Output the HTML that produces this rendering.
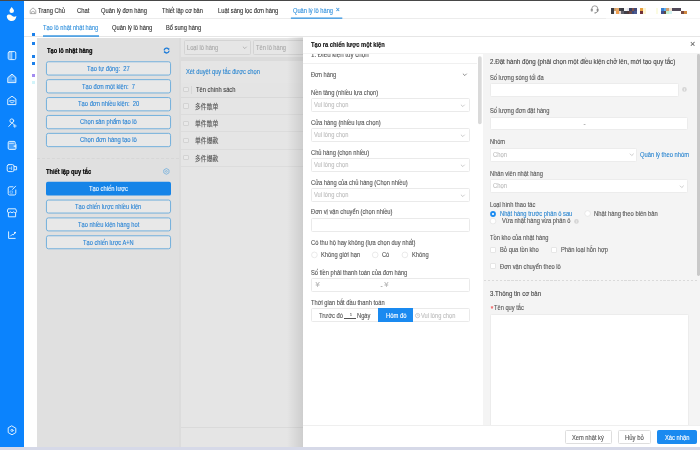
<!DOCTYPE html>
<html lang="vi">
<head>
<meta charset="utf-8">
<title>Quản lý lô hàng</title>
<style>
html,body{margin:0;padding:0;}
body{width:700px;height:450px;overflow:hidden;background:#fff;position:relative;font-family:"Liberation Sans","Noto Sans CJK SC",sans-serif;font-size:6px;color:#444;}
.a{position:absolute;box-sizing:border-box;}
.t{position:absolute;white-space:pre;line-height:1.15;transform-origin:0 50%;-webkit-text-stroke:0.12px currentColor;}
.sq{position:absolute;width:3px;height:3px;background:#1c80ea;left:32px;}
.inp{position:absolute;box-sizing:border-box;height:14.4px;border:0.8px solid #eaeaea;border-radius:1.5px;background:#fff;}
.cb{position:absolute;box-sizing:border-box;width:5.6px;height:5.6px;border:0.7px solid #e6e6e6;border-radius:1px;background:#fff;}
.cbm{position:absolute;box-sizing:border-box;width:5.8px;height:5.8px;border:0.7px solid #d3d3d3;border-radius:1px;background:#e9e9e9;}
.fb{position:absolute;box-sizing:border-box;top:430px;height:14px;border:0.8px solid #dedede;border-radius:1.5px;background:#fff;}
svg{position:absolute;overflow:visible;}
</style>
</head>
<body>
<!-- top strip -->
<div class="a" style="left:0;top:0;width:700px;height:1px;background:#484848;"></div>
<!-- sidebar -->
<div class="a" style="left:0;top:1px;width:24px;height:447px;background:#0b83fd;"></div>
<!-- bottom strip -->
<!-- nav borders -->
<div class="a" style="left:24px;top:18.2px;width:582px;height:0.8px;background:#ececec;"></div>
<div class="a" style="left:606px;top:18.2px;width:94px;height:0.8px;background:#f6f6f6;"></div>
<div class="a" style="left:24px;top:36.2px;width:676px;height:0.8px;background:#e6e6e6;"></div>
<svg style="left:0;top:0;" width="700" height="40" viewBox="0 0 700 40"><rect x="290.9" y="17.5" width="51.4" height="1.3" fill="#3393e0"/><rect x="43" y="35.3" width="56" height="1.5" fill="#3393e0"/></svg>
<!-- small squares -->
<div class="sq" style="top:33px;"></div>
<div class="sq" style="top:42.2px;"></div>
<div class="sq" style="top:55.2px;"></div>
<div class="sq" style="top:61.6px;"></div>
<div class="sq" style="top:74.3px;background:#a48cf0;"></div>
<div class="sq" style="top:80.8px;background:#d2f4fa;"></div>
<!-- left panel -->
<div class="a" style="left:37px;top:38px;width:266px;height:410px;background:#dcdcdc;"></div>
<div class="a" style="left:37px;top:38px;width:142px;height:410px;background:#e0e0e0;"></div>
<div class="a" style="left:37.2px;top:157.6px;width:142.3px;height:0;border-top:0.8px dashed #d7d7d7;"></div>
<svg style="left:0;top:0;" width="200" height="260" viewBox="0 0 200 260"><rect x="46.45" y="61.75" width="124.1" height="13.3" rx="1.9" fill="#e8e8e8" stroke="#66aadb" stroke-width="0.9"/><rect x="46.45" y="79.65" width="124.1" height="13.3" rx="1.9" fill="#e8e8e8" stroke="#66aadb" stroke-width="0.9"/><rect x="46.45" y="97.55" width="124.1" height="13.3" rx="1.9" fill="#e8e8e8" stroke="#66aadb" stroke-width="0.9"/><rect x="46.45" y="115.45" width="124.1" height="13.3" rx="1.9" fill="#e8e8e8" stroke="#66aadb" stroke-width="0.9"/><rect x="46.45" y="133.35" width="124.1" height="13.3" rx="1.9" fill="#e8e8e8" stroke="#66aadb" stroke-width="0.9"/><rect x="46" y="181.8" width="125" height="13.8" rx="1.9" fill="#1584e8"/><rect x="46.45" y="200.05" width="124.1" height="13.0" rx="1.9" fill="#e8e8e8" stroke="#66aadb" stroke-width="0.9"/><rect x="46.45" y="217.90" width="124.1" height="13.0" rx="1.9" fill="#e8e8e8" stroke="#66aadb" stroke-width="0.9"/><rect x="46.45" y="235.75" width="124.1" height="13.0" rx="1.9" fill="#e8e8e8" stroke="#66aadb" stroke-width="0.9"/></svg>
<!-- middle -->
<div class="a" style="left:181px;top:38px;width:122px;height:19px;background:#e5e5e5;"></div>
<div class="a" style="left:181px;top:57px;width:122px;height:4px;background:#dbdbdb;"></div>
<div class="a" style="left:181px;top:61px;width:122px;height:386.5px;background:#e5e5e5;"></div>
<div class="a" style="left:184px;top:40.4px;width:66.6px;height:14.2px;border:0.8px solid #d4d4d4;border-radius:1.5px;background:#e6e6e6;"></div>
<div class="a" style="left:253.4px;top:40.4px;width:60px;height:14.2px;border:0.8px solid #d4d4d4;border-radius:1.5px;background:#e6e6e6;"></div>
<svg style="left:241.6px;top:45.8px;" width="5.6" height="3.4" viewBox="0 0 5.6 3.4"><path d="M0.9 0.7 L2.8 2.6 L4.7 0.7" fill="none" stroke="#a8a8a8" stroke-width="0.8"/></svg>
<div class="a" style="left:181px;top:83px;width:122px;height:14px;background:#e4e4e4;"></div>
<div class="a" style="left:181px;top:97.2px;width:122px;height:0.8px;background:#d9d9d9;"></div>
<div class="a" style="left:181px;top:114.3px;width:122px;height:0.8px;background:#dcdcdc;"></div>
<div class="a" style="left:181px;top:131.4px;width:122px;height:0.8px;background:#dcdcdc;"></div>
<div class="a" style="left:181px;top:148.5px;width:122px;height:0.8px;background:#dcdcdc;"></div>
<div class="a" style="left:181px;top:165.6px;width:122px;height:0.8px;background:#dcdcdc;"></div>
<div class="a" style="left:181px;top:427.3px;width:122px;height:0.8px;background:#dadada;"></div>
<div class="cbm" style="left:183px;top:86.6px;"></div>
<div class="cbm" style="left:183px;top:103.4px;"></div>
<div class="cbm" style="left:183px;top:120.5px;"></div>
<div class="cbm" style="left:183px;top:137.6px;"></div>
<div class="cbm" style="left:183px;top:154.7px;"></div>
<div class="a" style="left:190.8px;top:85.5px;width:0.7px;height:8.5px;background:#d6d6d6;"></div>
<!-- drawer -->
<div class="a" style="left:287px;top:37px;width:16px;height:410.5px;background:linear-gradient(to right,rgba(0,0,0,0),rgba(0,0,0,0.10));"></div>
<div class="a" style="left:303px;top:37px;width:397px;height:410.5px;background:#fff;"></div>
<div class="a" style="left:303px;top:52.6px;width:397px;height:0.8px;background:#f3f3f3;"></div>
<!-- clipped heading -->
<div class="a" style="left:303px;top:54px;width:170px;height:8px;overflow:hidden;will-change:transform;"><span class="t" style="left:8.4px;top:-2.8px;font-size:6.5px;color:#555;transform:scaleX(0.95);">1. Điều kiện tùy chọn</span></div>
<div class="a" style="left:303px;top:62.8px;width:174px;height:0.8px;background:#f0f0f0;"></div>
<svg style="left:461.5px;top:73px;" width="5.6" height="3.4" viewBox="0 0 5.6 3.4"><path d="M0.9 0.7 L2.8 2.6 L4.7 0.7" fill="none" stroke="#777" stroke-width="0.85"/></svg>
<!-- left column inputs -->
<div class="inp" style="left:311.4px;top:97.8px;width:158.6px;"></div>
<div class="inp" style="left:311.4px;top:127.9px;width:158.6px;"></div>
<div class="inp" style="left:311.4px;top:157.9px;width:158.6px;"></div>
<div class="inp" style="left:311.4px;top:187.9px;width:158.6px;"></div>
<div class="inp" style="left:311.4px;top:217.9px;width:158.6px;"></div>
<div class="inp" style="left:311.4px;top:277.9px;width:158.6px;"></div>
<svg style="left:460.2px;top:103.6px;" width="5.6" height="3.4" viewBox="0 0 5.6 3.4"><path d="M0.9 0.7 L2.8 2.6 L4.7 0.7" fill="none" stroke="#bdbdbd" stroke-width="0.8"/></svg>
<svg style="left:460.2px;top:133.7px;" width="5.6" height="3.4" viewBox="0 0 5.6 3.4"><path d="M0.9 0.7 L2.8 2.6 L4.7 0.7" fill="none" stroke="#bdbdbd" stroke-width="0.8"/></svg>
<svg style="left:460.2px;top:163.7px;" width="5.6" height="3.4" viewBox="0 0 5.6 3.4"><path d="M0.9 0.7 L2.8 2.6 L4.7 0.7" fill="none" stroke="#bdbdbd" stroke-width="0.8"/></svg>
<svg style="left:460.2px;top:193.7px;" width="5.6" height="3.4" viewBox="0 0 5.6 3.4"><path d="M0.9 0.7 L2.8 2.6 L4.7 0.7" fill="none" stroke="#bdbdbd" stroke-width="0.8"/></svg>
<!-- time group -->
<div class="inp" style="left:311.4px;top:308px;width:158.6px;"></div>
<div class="a" style="left:377.7px;top:308px;width:35.8px;height:14.4px;background:#1a8af0;"></div>
<div class="a" style="left:344.3px;top:317.6px;width:12px;height:0.6px;background:#555;"></div>
<svg style="left:415px;top:312.6px;" width="5.2" height="5.2" viewBox="0 0 4.6 4.6"><circle cx="2.3" cy="2.3" r="1.9" fill="none" stroke="#bcbcbc" stroke-width="0.65"/><path d="M2.3 1.2 V2.4 H3.2" fill="none" stroke="#bcbcbc" stroke-width="0.55"/></svg>
<!-- left scroll thumb -->
<svg style="left:0;top:0;" width="700" height="130" viewBox="0 0 700 130"><rect x="478" y="56.2" width="3.7" height="68" rx="1.8" fill="#dadada"/></svg>
<!-- right section -->
<div class="a" style="left:483px;top:53.6px;width:217px;height:372px;background:#f4f4f4;"></div>
<div class="a" style="left:484px;top:280px;width:213px;height:1px;background:repeating-linear-gradient(to right,#dadada 0,#dadada 2.3px,transparent 2.3px,transparent 3.9px);"></div>
<div class="a" style="left:697px;top:54px;width:3px;height:222.4px;border-radius:1.4px;background:#c9c9c9;"></div>
<div class="inp" style="left:490.4px;top:82.5px;width:189px;border-color:#ececec;"></div>
<svg style="left:682.2px;top:87.4px;" width="4.9" height="4.9" viewBox="0 0 4.4 4.4"><circle cx="2.2" cy="2.2" r="2.1" fill="#d6d6d6"/><path d="M2.2 1.9 V3.3" stroke="#fff" stroke-width="0.6"/><circle cx="2.2" cy="1.15" r="0.35" fill="#fff"/></svg>
<div class="inp" style="left:490.4px;top:117px;width:198px;height:13.3px;border-color:#ececec;"></div>
<div class="inp" style="left:490.4px;top:147.6px;width:146.6px;height:14px;border-color:#ececec;"></div>
<div class="inp" style="left:490.4px;top:179px;width:198px;height:14px;border-color:#ececec;"></div>
<svg style="left:629px;top:153.2px;" width="5.6" height="3.4" viewBox="0 0 5.6 3.4"><path d="M0.9 0.7 L2.8 2.6 L4.7 0.7" fill="none" stroke="#bdbdbd" stroke-width="0.8"/></svg>
<svg style="left:679.3px;top:184.6px;" width="5.6" height="3.4" viewBox="0 0 5.6 3.4"><path d="M0.9 0.7 L2.8 2.6 L4.7 0.7" fill="none" stroke="#bdbdbd" stroke-width="0.8"/></svg>
<!-- radios right -->
<svg style="left:490px;top:210.6px;" width="6" height="6" viewBox="0 0 6 6"><circle cx="3" cy="3" r="2.9" fill="#1a8af0"/><circle cx="3" cy="3" r="1.1" fill="#fff"/></svg>
<svg style="left:573.6px;top:218.7px;" width="4.9" height="4.9" viewBox="0 0 4.4 4.4"><circle cx="2.2" cy="2.2" r="2.1" fill="#d6d6d6"/><path d="M2.2 1.9 V3.3" stroke="#f3f3f3" stroke-width="0.6"/><circle cx="2.2" cy="1.15" r="0.35" fill="#f3f3f3"/></svg>
<div class="cb" style="left:490.3px;top:247px;"></div>
<div class="cb" style="left:551.1px;top:247px;"></div>
<div class="cb" style="left:490.3px;top:263.4px;"></div>
<svg style="left:0;top:0;" width="700" height="300" viewBox="0 0 700 300"><circle cx="314.4" cy="254.9" r="2.85" fill="#fff" stroke="#e1e1e1" stroke-width="0.7"/><circle cx="375.2" cy="254.9" r="2.85" fill="#fff" stroke="#e1e1e1" stroke-width="0.7"/><circle cx="404.9" cy="254.9" r="2.85" fill="#fff" stroke="#e1e1e1" stroke-width="0.7"/><circle cx="587.6" cy="213.5" r="2.85" fill="#fff" stroke="#e1e1e1" stroke-width="0.7"/><circle cx="493.0" cy="221.1" r="2.85" fill="#fff" stroke="#e1e1e1" stroke-width="0.7"/></svg>
<!-- textarea -->
<div class="inp" style="left:490.4px;top:314px;width:198.2px;height:120px;border-color:#ececec;"></div>
<!-- footer -->
<div class="a" style="left:303px;top:425.4px;width:397px;height:22.1px;background:#fff;border-top:0.8px solid #efefef;"></div>
<div class="fb" style="left:564.5px;width:47.3px;"></div>
<div class="fb" style="left:617.5px;width:33.2px;"></div>
<div class="fb" style="left:656.7px;width:40.1px;background:#1a8af0;border-color:#1a8af0;"></div>
<div class="a" style="left:0;top:447px;width:700px;height:3px;background:#d6d9e8;"></div>
<!-- mosaic -->
<svg style="left:0;top:0;" width="700" height="20" viewBox="0 0 700 20" shape-rendering="crispEdges"><rect x="611.10" y="7.90" width="2.57" height="3.05" fill="#3a3b44"/><rect x="613.67" y="7.90" width="2.57" height="3.05" fill="#c8a070"/><rect x="616.24" y="7.90" width="2.57" height="3.05" fill="#e8a868"/><rect x="618.81" y="7.90" width="2.57" height="3.05" fill="#444448"/><rect x="621.38" y="7.90" width="2.57" height="3.05" fill="#3c3c44"/><rect x="623.95" y="7.90" width="2.57" height="3.05" fill="#f4f4f4"/><rect x="626.52" y="7.90" width="2.57" height="3.05" fill="#e4e4ec"/><rect x="629.09" y="7.90" width="2.57" height="3.05" fill="#3a4060"/><rect x="631.66" y="7.90" width="2.57" height="3.05" fill="#80504a"/><rect x="634.23" y="7.90" width="2.57" height="3.05" fill="#404878"/><rect x="611.10" y="10.95" width="2.57" height="3.05" fill="#3c3c40"/><rect x="613.67" y="10.95" width="2.57" height="3.05" fill="#f0f0f0"/><rect x="616.24" y="10.95" width="2.57" height="3.05" fill="#f0a050"/><rect x="618.81" y="10.95" width="2.57" height="3.05" fill="#e8d8d0"/><rect x="621.38" y="10.95" width="2.57" height="3.05" fill="#60606a"/><rect x="623.95" y="10.95" width="2.57" height="3.05" fill="#40404a"/><rect x="626.52" y="10.95" width="2.57" height="3.05" fill="#503a3a"/><rect x="629.09" y="10.95" width="2.57" height="3.05" fill="#6a4a4a"/><rect x="631.66" y="10.95" width="2.57" height="3.05" fill="#3a4a80"/><rect x="634.23" y="10.95" width="2.57" height="3.05" fill="#4a5a90"/><rect x="640.00" y="7.90" width="3.20" height="3.05" fill="#e8a040"/><rect x="643.20" y="7.90" width="3.20" height="3.05" fill="#fdf6d0"/><rect x="640.00" y="10.95" width="3.20" height="3.05" fill="#70303a"/><rect x="643.20" y="10.95" width="3.20" height="3.05" fill="#fdf6d0"/><rect x="655.50" y="7.90" width="2.60" height="3.05" fill="#fbfbe2"/><rect x="655.50" y="10.95" width="2.60" height="3.05" fill="#fbfbe2"/><rect x="661.30" y="7.90" width="2.55" height="3.05" fill="#3a80d0"/><rect x="663.85" y="7.90" width="2.55" height="3.05" fill="#60b0f0"/><rect x="666.40" y="7.90" width="2.55" height="3.05" fill="#d0a070"/><rect x="668.95" y="7.90" width="2.55" height="3.05" fill="#f0e0d0"/><rect x="661.30" y="10.95" width="2.55" height="3.05" fill="#405090"/><rect x="663.85" y="10.95" width="2.55" height="3.05" fill="#604a40"/><rect x="666.40" y="10.95" width="2.55" height="3.05" fill="#c0f0d0"/><rect x="668.95" y="10.95" width="2.55" height="3.05" fill="#d0f0f0"/><rect x="672.20" y="7.90" width="9.00" height="2.80" fill="#504858"/><rect x="681.20" y="10.70" width="2.90" height="2.80" fill="#7a4a40"/><rect x="684.10" y="10.70" width="2.90" height="2.80" fill="#d08840"/></svg>
<!-- icons -->
<svg style="left:0;top:0;" width="24" height="450" viewBox="0 0 24 450" fill="none" stroke="#e8f6ff" stroke-width="0.95" stroke-linejoin="round" stroke-linecap="round">
<!-- logo -->
<path d="M11.7 7 C12.6 8.3 14 9.6 14 10.8 A2.3 2.3 0 0 1 9.4 10.8 C9.4 9.6 10.8 8.3 11.7 7 Z" fill="#fffdf5" stroke="none"/>
<path d="M6.8 16 C8 14 10.5 14.3 12 15.8 C13.3 17 15 17 16.4 16 C16.2 19 14.2 21 11.6 21 C8.8 21 6.8 18.8 6.8 16 Z" fill="#fffdf5" stroke="none"/>
<!-- 1 book -->
<rect x="8.2" y="51.6" width="7.6" height="8" rx="1.4"/>
<rect x="8.6" y="52" width="3" height="7.2" fill="#bfe0ff" fill-opacity="0.55" stroke="none"/>
<path d="M11.8 51.8 V59.4" stroke-width="0.7"/>
<!-- 2 house -->
<path d="M8.1 77.4 L12 74.1 L15.9 77.4 V82.6 H8.1 Z" fill="#bfe0ff" fill-opacity="0.45"/>
<circle cx="13" cy="78.6" r="1.2" fill="#0b83fd" stroke="none"/>
<!-- 3 envelope -->
<path d="M8.1 99 L12 96.2 L15.9 99 V104.6 H8.1 Z"/>
<path d="M9.8 100.6 H14.2 M9.8 101.6 L12 103 L14.2 101.6" stroke-width="0.8"/>
<!-- 4 person -->
<circle cx="11.8" cy="120.8" r="1.9"/>
<path d="M8.8 126.4 L11.6 123.4 M12.4 123.2 L14 124.6" />
<path d="M14.8 124.6 V127.4 M13.4 126 H16.2" stroke-width="0.8"/>
<!-- 5 wallet -->
<path d="M8.2 142.4 Q8.2 141.4 9.2 141.4 H14.2 Q15.2 141.4 15.2 142.4 V143.6 Q16 143.8 16 144.8 V148.4 Q16 149.4 15 149.4 H9.2 Q8.2 149.4 8.2 148.4 Z" fill="#bfe0ff" fill-opacity="0.35"/>
<path d="M9.6 143.4 H14" stroke-width="0.7" stroke-dasharray="0.8 0.7"/>
<path d="M13 146 L15.8 145 V147.6 Z" fill="#e8f6ff" stroke="none"/>
<!-- 6 video -->
<rect x="7.2" y="164.6" width="6.8" height="7" rx="1.6"/>
<path d="M14.2 166.6 H16.6 V169.8 H14.2" />
<path d="M9.4 168.2 H10.4 M11.6 166.8 V169.6" stroke-width="0.7"/>
<!-- 7 edit -->
<path d="M13 186.8 H9.6 Q8.2 186.8 8.2 188.2 V193.6 Q8.2 195 9.6 195 H14.4 Q15.8 195 15.8 193.6 V190"/>
<path d="M12.6 189.4 L15.6 186.2" />
<path d="M10.4 191 H12.6 V193.2 H10.4 Z" stroke-width="0.6" stroke-opacity="0.7"/>
<!-- 8 shop -->
<path d="M8.4 208.8 H15.6 L16.6 211.4 Q16.6 212.6 15.4 212.6 Q14.4 212.6 13.8 211.8 Q13 212.6 12 212.6 Q11 212.6 10.2 211.8 Q9.6 212.6 8.6 212.6 Q7.4 212.6 7.4 211.4 Z"/>
<path d="M8.4 212.8 V216.8 H15.6 V212.8"/>
<!-- 9 chart -->
<path d="M8.6 231.8 V238.4 H15.2"/>
<path d="M10.6 236 L12.2 234.4 L13.2 235 L15.2 232.6" />
<circle cx="15" cy="232.6" r="0.9" fill="#fff" stroke="none"/>
<!-- settings -->
<path d="M12 426 L15.8 428.2 V432.6 L12 434.8 L8.2 432.6 V428.2 Z"/>
<circle cx="12" cy="430.4" r="1.1" stroke-width="0.8"/>
</svg>
<!-- nav home -->
<svg style="left:29px;top:6.7px;" width="8" height="8" viewBox="0 0 8 8" fill="none" stroke="#8a8a8a" stroke-width="0.7" stroke-linejoin="round"><path d="M1.2 3.4 L4 0.9 L6.8 3.4 V6.6 H1.2 Z"/><path d="M2.6 6.6 V4.8 Q4 3.6 5.4 4.8 V6.6" stroke-width="0.6"/></svg>
<!-- headset -->
<svg style="left:590px;top:4px;" width="10" height="11" viewBox="0 0 10 11" fill="none" stroke="#808080" stroke-width="0.75" stroke-linecap="round"><path d="M1.8 6 V4.8 A3 3 0 0 1 7.8 4.8 V6"/><path d="M1.4 5 H2.4 V7.2 H1.4 Z M7.2 5 H8.2 V7.2 H7.2 Z" fill="#808080" stroke-width="0.4"/><path d="M7.8 7.2 Q7.6 8.8 5.4 8.9" /><circle cx="5" cy="8.9" r="0.6" fill="#808080" stroke="none"/></svg>
<!-- refresh -->
<svg style="left:163px;top:47.4px;" width="7.2" height="7.2" viewBox="0 0 7.2 7.2" fill="none" stroke="#1a7ad8" stroke-width="1.25" stroke-linecap="round"><path d="M1.2 3 A2.5 2.5 0 0 1 5.6 2.2"/><path d="M6 4.2 A2.5 2.5 0 0 1 1.6 5"/><path d="M6.3 1 V2.6 H4.7 Z M0.9 6.2 V4.6 H2.5 Z" fill="#1a7ad8" stroke="none"/></svg>
<!-- gear -->
<svg style="left:163.4px;top:168.2px;" width="6.8" height="6.8" viewBox="0 0 6.8 6.8" fill="none" stroke="#62a8dc" stroke-width="0.7" stroke-linejoin="round"><path d="M3.4 0.5 L6 1.95 V4.85 L3.4 6.3 L0.8 4.85 V1.95 Z"/><circle cx="3.4" cy="3.4" r="0.9" stroke-width="0.6"/></svg>

<!-- texts -->
<div id="txt" style="position:absolute;left:0;top:0;width:700px;height:450px;will-change:transform;">
<span class="t" style="left:38.0px;top:6.76px;font-size:6.50px;color:#2e2e2e;transform:scaleX(0.886);">Trang Chủ</span>
<span class="t" style="left:77.0px;top:6.76px;font-size:6.50px;color:#2e2e2e;transform:scaleX(0.903);">Chat</span>
<span class="t" style="left:100.6px;top:6.76px;font-size:6.50px;color:#2e2e2e;transform:scaleX(0.885);">Quản lý đơn hàng</span>
<span class="t" style="left:162.0px;top:6.76px;font-size:6.50px;color:#2e2e2e;transform:scaleX(0.872);">Thiết lập cơ bản</span>
<span class="t" style="left:217.7px;top:6.76px;font-size:6.50px;color:#2e2e2e;transform:scaleX(0.884);">Luật sàng lọc đơn hàng</span>
<span class="t" style="left:292.9px;top:6.76px;font-size:6.50px;color:#2f8fdc;transform:scaleX(0.878);">Quản lý lô hàng</span>
<span class="t" style="left:335.7px;top:6.28px;font-size:7.00px;color:#2f8fdc;">×</span>
<span class="t" style="left:43.4px;top:23.96px;font-size:6.50px;color:#2f8fdc;transform:scaleX(0.873);">Tạo lô nhật nhật hàng</span>
<span class="t" style="left:112.0px;top:23.96px;font-size:6.50px;color:#2e2e2e;transform:scaleX(0.885);">Quản lý lô hàng</span>
<span class="t" style="left:165.7px;top:23.96px;font-size:6.50px;color:#2e2e2e;transform:scaleX(0.877);">Bổ sung hàng</span>
<span class="t" style="left:46.7px;top:46.66px;font-size:6.50px;color:#000;font-weight:bold;transform:scaleX(0.875);-webkit-text-stroke:0.2px #000;">Tạo lô nhật hàng</span>
<span class="t" style="left:46.2px;top:167.76px;font-size:6.50px;color:#000;font-weight:bold;transform:scaleX(0.879);-webkit-text-stroke:0.2px #000;">Thiết lập quy tắc</span>
<span class="t" style="left:86.9px;top:64.76px;font-size:6.50px;color:#2a84d4;transform:scaleX(0.890);">Tạo tự động:  27</span>
<span class="t" style="left:81.8px;top:82.56px;font-size:6.50px;color:#2a84d4;transform:scaleX(0.885);">Tạo đơn một kiện:  7</span>
<span class="t" style="left:77.7px;top:100.46px;font-size:6.50px;color:#2a84d4;transform:scaleX(0.894);">Tạo đơn nhiều kiện:  20</span>
<span class="t" style="left:79.9px;top:118.36px;font-size:6.50px;color:#2a84d4;transform:scaleX(0.892);">Chọn sản phẩm tạo lô</span>
<span class="t" style="left:79.9px;top:136.26px;font-size:6.50px;color:#2a84d4;transform:scaleX(0.903);">Chọn đơn hàng tạo lô</span>
<span class="t" style="left:88.8px;top:185.06px;font-size:6.50px;color:#f4f9ff;transform:scaleX(0.893);">Tạo chiến lược</span>
<span class="t" style="left:75.2px;top:202.86px;font-size:6.50px;color:#2a84d4;transform:scaleX(0.883);">Tạo chiến lược nhiều kiện</span>
<span class="t" style="left:77.7px;top:220.76px;font-size:6.50px;color:#2a84d4;transform:scaleX(0.879);">Tạo nhiều kiện hàng hot</span>
<span class="t" style="left:82.9px;top:238.56px;font-size:6.50px;color:#2a84d4;transform:scaleX(0.875);">Tạo chiến lược A+N</span>
<span class="t" style="left:187.4px;top:43.86px;font-size:6.50px;color:#a8a8a8;transform:scaleX(0.881);">Loại lô hàng</span>
<span class="t" style="left:256.0px;top:43.86px;font-size:6.50px;color:#a8a8a8;transform:scaleX(0.874);">Tên lô hàng</span>
<span class="t" style="left:186.0px;top:67.86px;font-size:6.50px;color:#2b86d0;transform:scaleX(0.887);">Xét duyệt quy tắc được chọn</span>
<span class="t" style="left:195.6px;top:85.86px;font-size:6.50px;color:#444;transform:scaleX(0.887);">Tên chính sách</span>
<span class="t" style="left:194.7px;top:103.26px;font-size:6.50px;color:#555;transform:scaleX(0.896);">多件散单</span>
<span class="t" style="left:194.7px;top:120.36px;font-size:6.50px;color:#555;transform:scaleX(0.896);">单件散单</span>
<span class="t" style="left:194.7px;top:137.46px;font-size:6.50px;color:#555;transform:scaleX(0.896);">单件爆款</span>
<span class="t" style="left:194.7px;top:154.56px;font-size:6.50px;color:#555;transform:scaleX(0.896);">多件爆款</span>
<span class="t" style="left:311.4px;top:40.56px;font-size:6.50px;color:#111;font-weight:bold;transform:scaleX(0.884);-webkit-text-stroke:0.15px #111;">Tạo ra chiến lược một kiện</span>
<span class="t" style="left:690.0px;top:39.43px;font-size:9.00px;color:#666;">×</span>
<span class="t" style="left:311.4px;top:70.56px;font-size:6.50px;color:#555;transform:scaleX(0.874);">Đơn hàng</span>
<span class="t" style="left:311.4px;top:88.56px;font-size:6.50px;color:#555;transform:scaleX(0.890);">Nền tảng (nhiều lựa chọn)</span>
<span class="t" style="left:311.4px;top:118.86px;font-size:6.50px;color:#555;transform:scaleX(0.891);">Cửa hàng (nhiều lựa chọn)</span>
<span class="t" style="left:311.4px;top:149.16px;font-size:6.50px;color:#555;transform:scaleX(0.880);">Chủ hàng (chọn nhiều)</span>
<span class="t" style="left:311.4px;top:178.56px;font-size:6.50px;color:#555;transform:scaleX(0.885);">Cửa hàng của chủ hàng (Chọn nhiều)</span>
<span class="t" style="left:311.4px;top:208.26px;font-size:6.50px;color:#555;transform:scaleX(0.885);">Đơn vị vận chuyển (chọn nhiều)</span>
<span class="t" style="left:311.4px;top:238.56px;font-size:6.50px;color:#555;transform:scaleX(0.883);">Có thu hộ hay không (lựa chọn duy nhất)</span>
<span class="t" style="left:311.4px;top:268.76px;font-size:6.50px;color:#555;transform:scaleX(0.886);">Số tiền phải thanh toán của đơn hàng</span>
<span class="t" style="left:311.4px;top:299.16px;font-size:6.50px;color:#555;transform:scaleX(0.882);">Thời gian bắt đầu thanh toán</span>
<span class="t" style="left:314.3px;top:101.26px;font-size:6.50px;color:#bdbdbd;transform:scaleX(0.876);">Vui lòng chọn</span>
<span class="t" style="left:314.3px;top:131.26px;font-size:6.50px;color:#bdbdbd;transform:scaleX(0.876);">Vui lòng chọn</span>
<span class="t" style="left:314.3px;top:161.26px;font-size:6.50px;color:#bdbdbd;transform:scaleX(0.876);">Vui lòng chọn</span>
<span class="t" style="left:314.3px;top:191.26px;font-size:6.50px;color:#bdbdbd;transform:scaleX(0.876);">Vui lòng chọn</span>
<span class="t" style="left:320.9px;top:251.16px;font-size:6.50px;color:#555;transform:scaleX(0.888);">Không giới hạn</span>
<span class="t" style="left:382.0px;top:251.16px;font-size:6.50px;color:#555;transform:scaleX(0.878);">Có</span>
<span class="t" style="left:412.0px;top:251.16px;font-size:6.50px;color:#555;transform:scaleX(0.883);">Không</span>
<span class="t" style="left:315.6px;top:280.93px;font-size:7.60px;color:#b4b4b4;">¥</span>
<span class="t" style="left:380.4px;top:281.86px;font-size:6.50px;color:#888;">-</span>
<span class="t" style="left:384.2px;top:280.93px;font-size:7.60px;color:#b4b4b4;">¥</span>
<span class="t" style="left:319.4px;top:311.56px;font-size:6.50px;color:#555;transform:scaleX(0.895);">Trước đó</span>
<span class="t" style="left:349.8px;top:313.19px;font-size:4.20px;color:#666;">1</span>
<span class="t" style="left:356.6px;top:311.56px;font-size:6.50px;color:#555;transform:scaleX(0.883);">Ngày</span>
<span class="t" style="left:385.5px;top:311.56px;font-size:6.50px;color:#fff;transform:scaleX(0.901);">Hôm đó</span>
<span class="t" style="left:421.4px;top:311.56px;font-size:6.50px;color:#bdbdbd;transform:scaleX(0.876);">Vui lòng chọn</span>
<span class="t" style="left:490.4px;top:58.23px;font-size:6.90px;color:#444;transform:scaleX(0.898);">2.Đặt hành động (phải chọn một điều kiện chở lên, mới tạo quy tắc)</span>
<span class="t" style="left:490.4px;top:73.86px;font-size:6.50px;color:#555;transform:scaleX(0.884);">Số lượng sóng tối đa</span>
<span class="t" style="left:490.4px;top:106.76px;font-size:6.50px;color:#555;transform:scaleX(0.882);">Số lượng đơn đặt hàng</span>
<span class="t" style="left:583.5px;top:120.26px;font-size:6.50px;color:#888;">-</span>
<span class="t" style="left:490.4px;top:138.26px;font-size:6.50px;color:#555;transform:scaleX(0.870);">Nhóm</span>
<span class="t" style="left:492.9px;top:150.86px;font-size:6.50px;color:#bdbdbd;transform:scaleX(0.907);">Chọn</span>
<span class="t" style="left:640.0px;top:150.66px;font-size:6.50px;color:#2b86d0;transform:scaleX(0.892);">Quản lý theo nhóm</span>
<span class="t" style="left:490.4px;top:169.86px;font-size:6.50px;color:#555;transform:scaleX(0.882);">Nhân viên nhật hàng</span>
<span class="t" style="left:492.9px;top:182.26px;font-size:6.50px;color:#bdbdbd;transform:scaleX(0.907);">Chọn</span>
<span class="t" style="left:490.4px;top:200.66px;font-size:6.50px;color:#555;transform:scaleX(0.876);">Loại hình thao tác</span>
<span class="t" style="left:500.2px;top:209.86px;font-size:6.50px;color:#2b86d0;transform:scaleX(0.886);">Nhật hàng trước phân ô sau</span>
<span class="t" style="left:594.2px;top:209.86px;font-size:6.50px;color:#555;transform:scaleX(0.896);">Nhật hàng theo biên bản</span>
<span class="t" style="left:501.9px;top:217.36px;font-size:6.50px;color:#555;transform:scaleX(0.879);">Vừa nhật hàng vừa phân ô</span>
<span class="t" style="left:490.4px;top:233.86px;font-size:6.50px;color:#555;transform:scaleX(0.880);">Tồn kho của nhật hàng</span>
<span class="t" style="left:500.2px;top:246.36px;font-size:6.50px;color:#555;transform:scaleX(0.887);">Bỏ qua tồn kho</span>
<span class="t" style="left:561.0px;top:246.36px;font-size:6.50px;color:#555;transform:scaleX(0.886);">Phân loại hỗn hợp</span>
<span class="t" style="left:500.2px;top:262.86px;font-size:6.50px;color:#555;transform:scaleX(0.882);">Đơn vận chuyển theo lô</span>
<span class="t" style="left:490.4px;top:289.53px;font-size:6.90px;color:#444;transform:scaleX(0.885);">3.Thông tin cơ bản</span>
<span class="t" style="left:490.8px;top:305.06px;font-size:6.50px;color:#e55;">*</span>
<span class="t" style="left:494.2px;top:304.46px;font-size:6.50px;color:#555;transform:scaleX(0.877);">Tên quy tắc</span>
<span class="t" style="left:572.0px;top:433.56px;font-size:6.50px;color:#555;transform:scaleX(0.880);">Xem nhật ký</span>
<span class="t" style="left:625.0px;top:433.56px;font-size:6.50px;color:#555;transform:scaleX(0.913);">Hủy bỏ</span>
<span class="t" style="left:664.6px;top:433.56px;font-size:6.50px;color:#fff;transform:scaleX(0.888);">Xác nhận</span>
</div>
</body>
</html>
